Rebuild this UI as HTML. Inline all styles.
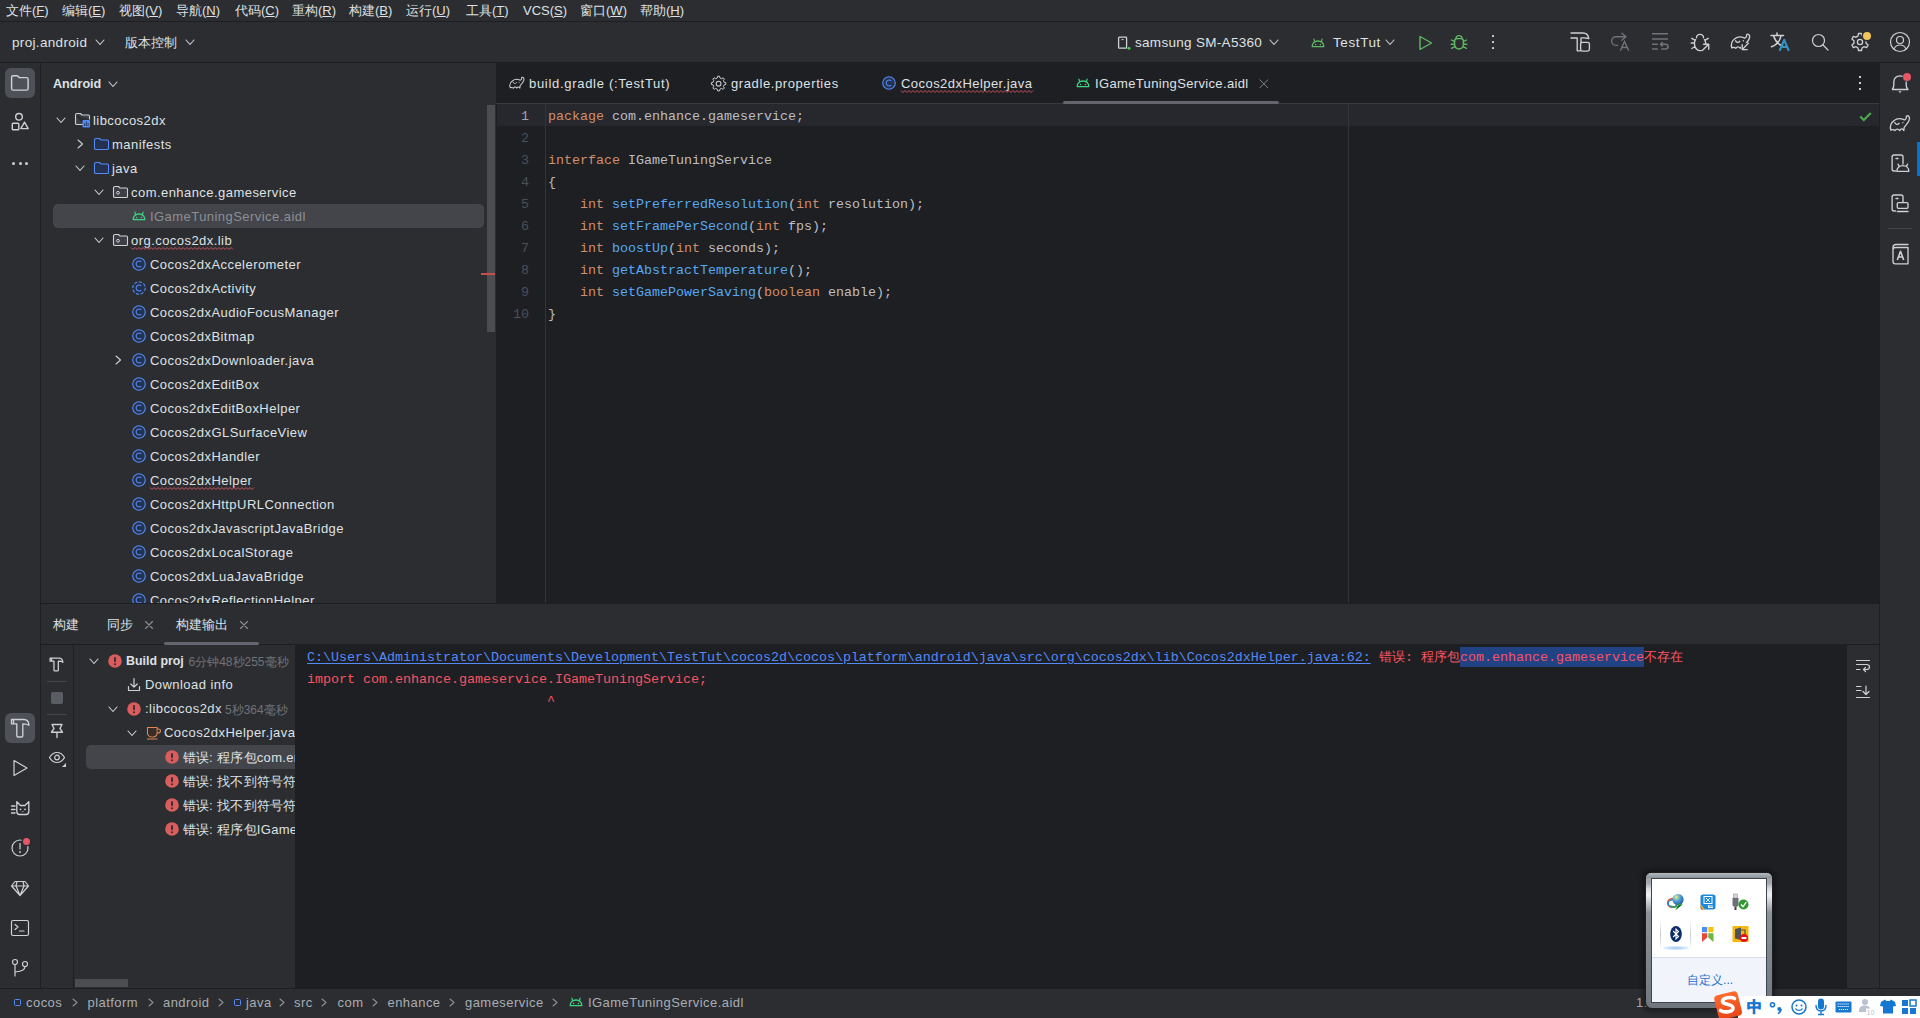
<!DOCTYPE html>
<html><head><meta charset="utf-8"><style>
*{margin:0;padding:0;box-sizing:border-box}
html,body{width:1920px;height:1018px;overflow:hidden}
body{background:#2B2D30;font-family:"Liberation Sans",sans-serif;color:#DFE1E5;position:relative;font-size:13px}
.a{position:absolute}
.t{position:absolute;white-space:pre}
svg{position:absolute;overflow:visible}
.s{fill:none;stroke:#CED0D6;stroke-width:1.1;stroke-linecap:round;stroke-linejoin:round}
.kw{color:#CF8E6D}.fn{color:#56A8F5}

</style></head><body>
<div class="a" style="left:0px;top:0px;width:1920px;height:21px;background:#2B2D30;"></div><div class="a" style="left:0px;top:21px;width:1920px;height:1px;background:#1E1F22;"></div><div class="a" style="left:0px;top:22px;width:1920px;height:40px;background:#2B2D30;"></div><div class="a" style="left:0px;top:62px;width:1920px;height:1px;background:#1E1F22;"></div><div class="a" style="left:40px;top:63px;width:1px;height:925px;background:#1E1F22;"></div><div class="a" style="left:41px;top:63px;width:455px;height:540px;background:#2B2D30;"></div><div class="a" style="left:496px;top:63px;width:1383px;height:40px;background:#1E1F22;"></div><div class="a" style="left:496px;top:103px;width:1383px;height:1px;background:#393B40;"></div><div class="a" style="left:496px;top:104px;width:1383px;height:499px;background:#1E1F22;"></div><div class="a" style="left:41px;top:603px;width:1838px;height:1px;background:#1E1F22;"></div><div class="a" style="left:41px;top:604px;width:1838px;height:384px;background:#2B2D30;"></div><div class="a" style="left:1879px;top:63px;width:1px;height:925px;background:#1E1F22;"></div><div class="a" style="left:0px;top:988px;width:1920px;height:1px;background:#1E1F22;"></div><div class="t" style="left:6px;top:4.23px;font-size:13px;line-height:14.95px;color:#DFE1E5;letter-spacing:0px;font-weight:normal;font-family:'Liberation Sans';">文件(<u>F</u>)</div><div class="t" style="left:62px;top:4.23px;font-size:13px;line-height:14.95px;color:#DFE1E5;letter-spacing:0px;font-weight:normal;font-family:'Liberation Sans';">编辑(<u>E</u>)</div><div class="t" style="left:119px;top:4.23px;font-size:13px;line-height:14.95px;color:#DFE1E5;letter-spacing:0px;font-weight:normal;font-family:'Liberation Sans';">视图(<u>V</u>)</div><div class="t" style="left:176px;top:4.23px;font-size:13px;line-height:14.95px;color:#DFE1E5;letter-spacing:0px;font-weight:normal;font-family:'Liberation Sans';">导航(<u>N</u>)</div><div class="t" style="left:235px;top:4.23px;font-size:13px;line-height:14.95px;color:#DFE1E5;letter-spacing:0px;font-weight:normal;font-family:'Liberation Sans';">代码(<u>C</u>)</div><div class="t" style="left:292px;top:4.23px;font-size:13px;line-height:14.95px;color:#DFE1E5;letter-spacing:0px;font-weight:normal;font-family:'Liberation Sans';">重构(<u>R</u>)</div><div class="t" style="left:349px;top:4.23px;font-size:13px;line-height:14.95px;color:#DFE1E5;letter-spacing:0px;font-weight:normal;font-family:'Liberation Sans';">构建(<u>B</u>)</div><div class="t" style="left:406px;top:4.23px;font-size:13px;line-height:14.95px;color:#DFE1E5;letter-spacing:0px;font-weight:normal;font-family:'Liberation Sans';">运行(<u>U</u>)</div><div class="t" style="left:466px;top:4.23px;font-size:13px;line-height:14.95px;color:#DFE1E5;letter-spacing:0px;font-weight:normal;font-family:'Liberation Sans';">工具(<u>T</u>)</div><div class="t" style="left:523px;top:4.23px;font-size:13px;line-height:14.95px;color:#DFE1E5;letter-spacing:0px;font-weight:normal;font-family:'Liberation Sans';">VCS(<u>S</u>)</div><div class="t" style="left:580px;top:4.23px;font-size:13px;line-height:14.95px;color:#DFE1E5;letter-spacing:0px;font-weight:normal;font-family:'Liberation Sans';">窗口(<u>W</u>)</div><div class="t" style="left:640px;top:4.23px;font-size:13px;line-height:14.95px;color:#DFE1E5;letter-spacing:0px;font-weight:normal;font-family:'Liberation Sans';">帮助(<u>H</u>)</div><div class="t" style="left:12px;top:34.78px;font-size:13.5px;line-height:15.52px;color:#DFE1E5;letter-spacing:0.33px;font-weight:normal;font-family:'Liberation Sans';">proj.android</div><svg style="left:95.0px;top:38.75px;" width="10" height="6.5" viewBox="0 0 10 6.5"><path d="M1 1 L5.0 5.5 L9 1" fill="none" stroke="#CED0D6" stroke-width="1.1" stroke-linecap="round" stroke-linejoin="round"/></svg><div class="t" style="left:125px;top:36.23px;font-size:13px;line-height:14.95px;color:#DFE1E5;letter-spacing:0px;font-weight:normal;font-family:'Liberation Sans';">版本控制</div><svg style="left:185.0px;top:38.75px;" width="10" height="6.5" viewBox="0 0 10 6.5"><path d="M1 1 L5.0 5.5 L9 1" fill="none" stroke="#CED0D6" stroke-width="1.1" stroke-linecap="round" stroke-linejoin="round"/></svg><svg style="left:1117px;top:36px;" width="14" height="14" viewBox="0 0 14 14"><rect x="1.6" y="1.2" width="8" height="11" rx="0.8" fill="none" stroke="#CED0D6" stroke-width="1.3"/><path d="M4.6 3.6 H6.6" stroke="#CED0D6" stroke-width="1"/><circle cx="12" cy="12.2" r="1.9" fill="#2B2D30"/><circle cx="12" cy="12.2" r="1.5" fill="#3DD03D"/></svg><div class="t" style="left:1135px;top:34.78px;font-size:13.5px;line-height:15.52px;color:#DFE1E5;letter-spacing:0.3px;font-weight:normal;font-family:'Liberation Sans';">samsung SM-A5360</div><svg style="left:1269.0px;top:38.75px;" width="10" height="6.5" viewBox="0 0 10 6.5"><path d="M1 1 L5.0 5.5 L9 1" fill="none" stroke="#CED0D6" stroke-width="1.1" stroke-linecap="round" stroke-linejoin="round"/></svg><svg style="left:1311px;top:38px;" width="14" height="10" viewBox="0 0 14 10"><g transform="scale(1.0)"><path d="M1.2 8.6 C1.2 5.2 3.6 3 7 3 C10.4 3 12.8 5.2 12.8 8.6 Z" fill="none" stroke="#5FB865" stroke-width="1.3" stroke-linejoin="round"/><path d="M3.7 3.9 L2.9 1.2 M10.3 3.9 L11.1 1.2" stroke="#5FB865" stroke-width="1.2" stroke-linecap="round"/><circle cx="4.6" cy="6.5" r="0.8" fill="#5FB865"/><circle cx="9.4" cy="6.5" r="0.8" fill="#5FB865"/></g></svg><div class="t" style="left:1333px;top:34.78px;font-size:13.5px;line-height:15.52px;color:#DFE1E5;letter-spacing:0.6px;font-weight:normal;font-family:'Liberation Sans';">TestTut</div><svg style="left:1385.0px;top:38.75px;" width="10" height="6.5" viewBox="0 0 10 6.5"><path d="M1 1 L5.0 5.5 L9 1" fill="none" stroke="#CED0D6" stroke-width="1.1" stroke-linecap="round" stroke-linejoin="round"/></svg><svg style="left:1418px;top:35px;" width="16" height="16" viewBox="0 0 16 16"><path d="M2 1.5 L13.5 8 L2 14.5 Z" fill="none" stroke="#5FB865" stroke-width="1.4" stroke-linejoin="round"/></svg><svg style="left:1450px;top:34px;" width="18" height="16" viewBox="0 0 18 16"><g fill="none" stroke="#5FB865" stroke-width="1.4" stroke-linecap="round" stroke-linejoin="round"><path d="M6 4.6 A3 3 0 0 1 12 4.6"/><path d="M4.6 7 C4.6 5.6 5.6 4.6 7 4.6 H11 C12.4 4.6 13.4 5.6 13.4 7 V10.5 C13.4 13.1 11.5 15 9 15 C6.5 15 4.6 13.1 4.6 10.5 Z"/><path d="M1.5 6 L4.6 7.6 M16.5 6 L13.4 7.6 M1.2 10.2 H4.6 M16.8 10.2 H13.4 M1.5 14.3 L4.8 12.6 M16.5 14.3 L13.2 12.6"/></g></svg><div class="a" style="left:1492px;top:35px;width:2.2px;height:2.4px;background:#CED0D6;border-radius:0.6px"></div><div class="a" style="left:1492px;top:41px;width:2.2px;height:2.4px;background:#CED0D6;border-radius:0.6px"></div><div class="a" style="left:1492px;top:47px;width:2.2px;height:2.4px;background:#CED0D6;border-radius:0.6px"></div><svg style="left:1570px;top:32px;" width="20" height="20" viewBox="0 0 20 20"><path d="M1 1 H13 C16 1 18.3 3 18.8 6.5 L14.5 5.8 H11 V10.5 M7.2 6 V18.8 H10.5 M7.2 6 H1 Z" fill="none" stroke="#CED0D6" stroke-width="1.35" stroke-linejoin="round" stroke-linecap="round"/><rect x="10.6" y="10.3" width="8.8" height="8.8" rx="1.8" fill="none" stroke="#CED0D6" stroke-width="1.35"/></svg><svg style="left:1611px;top:32px;" width="20" height="20" viewBox="0 0 20 20"><path d="M15 4.7 H5 A4.35 4.35 0 0 0 5 13.4 H6.5 M10.8 1.2 L15 4.7 L10.8 8.2" fill="none" stroke="#6F737A" stroke-width="1.35" stroke-linejoin="round" stroke-linecap="round"/><path d="M9.3 18.8 L13.5 9.4 L17.8 18.8 M10.8 15.5 H16.3" fill="none" stroke="#6F737A" stroke-width="1.4"/></svg><svg style="left:1650px;top:32px;" width="20" height="20" viewBox="0 0 20 20"><path d="M2 1.8 H18 M2 7 H18 M2 12.2 H7.8 M2 17 H7.8 M11.2 17 H15.6 A2.4 2.4 0 0 0 15.6 12.2 H10.5 M12.7 10 L10.5 12.2 L12.7 14.4" fill="none" stroke="#6F737A" stroke-width="1.6" stroke-linejoin="round"/></svg><svg style="left:1690px;top:32px;" width="20" height="20" viewBox="0 0 20 20"><path d="M6.5 5.8 A3.5 3.5 0 0 1 13.5 5.8 M5.6 7.5 C4.2 10 4.3 14 6 16.5 C7.2 18.2 9.2 18.9 11 18.6 M14.4 7.5 C15.3 9 15.7 10.6 15.8 12 M1.2 11 H4.6 M1.8 6.3 L5.2 8.3 M1.8 16.5 L5.2 14.5 M18.2 6.3 L14.8 8.3 M12.3 18.6 L18.6 12.3 M13.6 12.2 H18.7 V17.3" fill="none" stroke="#CED0D6" stroke-width="1.35" stroke-linejoin="round" stroke-linecap="round"/></svg><svg style="left:1730px;top:32px;" width="22" height="20" viewBox="0 0 22 20"><g transform="translate(1.2 1.6) scale(1.3)"><path d="M0.5 11 C-0.5 8.5 0.5 5.5 2.8 4 C4.5 2.5 7.5 2.2 10 3.3 C11 3.7 12 2.5 11.8 1.5 C11.6 0.6 12.8 0 13.6 0.8 C14.5 1.8 14 4 13 5.5 C12 7 11 8 10.3 9 L10 11.3 C9.3 10 8 9.5 7 11.3 C6 9.8 4.5 9.8 3.5 11.3 C2.8 10.6 1.5 10.5 0.5 11 Z" fill="none" stroke="#CED0D6" stroke-width="1.05" stroke-linejoin="round"/><path d="M3.3 5 C3.6 7 5.5 7.5 6.8 5.6" fill="none" stroke="#CED0D6" stroke-width="1"/><circle cx="9.3" cy="5.5" r="0.55" fill="#CED0D6"/></g><rect x="11" y="11" width="9" height="9" fill="#2B2D30"/><path d="M18.3 11.3 L12.2 17.6 M12.2 12.6 V17.6 H17.2" fill="none" stroke="#CED0D6" stroke-width="1.35" stroke-linecap="round" stroke-linejoin="round"/></svg><svg style="left:1770px;top:32px;" width="20" height="20" viewBox="0 0 20 20"><path d="M7 1 V3 M1 3.5 H13.5 M3.8 4.5 C5 8.5 8 12 12.5 14 M10.8 4.5 C9.8 9 6.5 12.8 1.5 14.8" fill="none" stroke="#CED0D6" stroke-width="1.5" stroke-linecap="round"/><path d="M9.6 18.8 L14.2 7.8 L18.8 18.8 M11.3 15 H17.1" fill="none" stroke="#3592C4" stroke-width="2.1" stroke-linejoin="round"/></svg><svg style="left:1810px;top:32px;" width="20" height="20" viewBox="0 0 20 20"><circle cx="8.5" cy="8.5" r="6" fill="none" stroke="#CED0D6" stroke-width="1.2" stroke-linecap="round" stroke-linejoin="round"/><path d="M13 13 L18 18" fill="none" stroke="#CED0D6" stroke-width="1.2" stroke-linecap="round" stroke-linejoin="round"/></svg><svg style="left:1850px;top:32px;" width="20" height="20" viewBox="0 0 20 20"><path d="M8.5 1.5 H11.5 L12.1 4.2 C12.8 4.5 13.4 4.8 14 5.3 L16.6 4.4 L18.1 7 L16 8.8 C16.1 9.6 16.1 10.4 16 11.2 L18.1 13 L16.6 15.6 L14 14.7 C13.4 15.2 12.8 15.5 12.1 15.8 L11.5 18.5 H8.5 L7.9 15.8 C7.2 15.5 6.6 15.2 6 14.7 L3.4 15.6 L1.9 13 L4 11.2 C3.9 10.4 3.9 9.6 4 8.8 L1.9 7 L3.4 4.4 L6 5.3 C6.6 4.8 7.2 4.5 7.9 4.2 Z" fill="none" stroke="#CED0D6" stroke-width="1.3" stroke-linejoin="round"/><circle cx="10" cy="10" r="2.6" fill="none" stroke="#CED0D6" stroke-width="1.3"/></svg><div class="a" style="left:1862.5px;top:31.5px;width:8px;height:8px;border-radius:4px;background:#F2C55C;box-shadow:0 0 0 1.5px #2B2D30"></div><svg style="left:1890px;top:32px;" width="20" height="20" viewBox="0 0 20 20"><circle cx="10" cy="10" r="9.5" fill="none" stroke="#CED0D6" stroke-width="1.2" stroke-linecap="round" stroke-linejoin="round"/><circle cx="10" cy="8" r="3.5" fill="none" stroke="#CED0D6" stroke-width="1.2" stroke-linecap="round" stroke-linejoin="round"/><path d="M4.2 16.5 C5.5 13.8 7.5 13 10 13 C12.5 13 14.5 13.8 15.8 16.5" fill="none" stroke="#CED0D6" stroke-width="1.2" stroke-linecap="round" stroke-linejoin="round"/></svg><div class="a" style="left:5px;top:68px;width:30px;height:30px;background:#4E5157;border-radius:6px"></div><svg style="left:10px;top:73px;" width="20" height="20" viewBox="0 0 20 20"><path d="M1.6 4.2 C1.6 3.2 2.3 2.7 3.1 2.7 H7.3 L9.4 4.6 H16.5 C17.4 4.6 18.1 5.3 18.1 6.2 V15.5 C18.1 16.4 17.4 17.1 16.5 17.1 H3.2 C2.3 17.1 1.6 16.4 1.6 15.5 Z" fill="none" stroke="#CED0D6" stroke-width="1.45" stroke-linejoin="round"/></svg><svg style="left:10px;top:112px;" width="20" height="20" viewBox="0 0 20 20"><circle cx="9" cy="4.8" r="3.3" fill="none" stroke="#CED0D6" stroke-width="1.4"/><rect x="2.3" y="11.3" width="6.5" height="6.5" rx="0.8" fill="none" stroke="#CED0D6" stroke-width="1.4"/><path d="M14.5 10.2 L18.2 16.6 H10.8 Z" fill="none" stroke="#CED0D6" stroke-width="1.4" stroke-linejoin="round"/></svg><div class="a" style="left:12.0px;top:161.5px;width:3px;height:3px;background:#CED0D6;border-radius:2px"></div><div class="a" style="left:18.5px;top:161.5px;width:3px;height:3px;background:#CED0D6;border-radius:2px"></div><div class="a" style="left:25.0px;top:161.5px;width:3px;height:3px;background:#CED0D6;border-radius:2px"></div><div class="a" style="left:5px;top:713px;width:30px;height:30px;background:#4E5157;border-radius:6px"></div><svg style="left:10px;top:718px;" width="20" height="20" viewBox="0 0 20 20"><path d="M1.5 1.5 H14 C16.8 1.5 18.6 3.5 19 7.2 C17.5 6.2 15.8 5.8 13 5.8 H12.8 V17.8 C12.8 18.5 12.3 19 11.6 19 H8 C7.3 19 6.8 18.5 6.8 17.8 V5.8 H1.5 Z M3.5 1.5 V5.8" fill="none" stroke="#CED0D6" stroke-width="1.35" stroke-linejoin="round" stroke-linecap="round"/></svg><svg style="left:10px;top:758px;" width="20" height="20" viewBox="0 0 20 20"><path d="M4 2.5 L17 10 L4 17.5 Z" fill="none" stroke="#CED0D6" stroke-width="1.2" stroke-linecap="round" stroke-linejoin="round"/></svg><svg style="left:10px;top:798px;" width="20" height="20" viewBox="0 0 20 20"><path d="M6.8 13.5 V3.6 L10.5 7.5 H15 L18.8 3.6 V13.5 C18.8 15.5 17.8 16.5 16 16.5 H9.5 C7.8 16.5 6.8 15.5 6.8 13.5 Z M1.5 8 H5 M1.5 11.5 H5 M1.5 15 H5" fill="none" stroke="#CED0D6" stroke-width="1.35" stroke-linejoin="round" stroke-linecap="round"/><circle cx="10.5" cy="11.3" r="0.9" fill="#CED0D6"/><circle cx="15" cy="11.3" r="0.9" fill="#CED0D6"/><path d="M12.2 13.4 L12.75 14 L13.3 13.4" fill="none" stroke="#CED0D6" stroke-width="0.9"/></svg><svg style="left:10px;top:838px;" width="20" height="20" viewBox="0 0 20 20"><circle cx="10" cy="10" r="8" fill="none" stroke="#CED0D6" stroke-width="1.2" stroke-linecap="round" stroke-linejoin="round"/><path d="M10 5.5 V11" fill="none" stroke="#CED0D6" stroke-width="1.2" stroke-linecap="round" stroke-linejoin="round"/><circle cx="10" cy="14" r="0.9" fill="#CED0D6"/></svg><div class="a" style="left:23px;top:838px;width:7px;height:7px;border-radius:4px;background:#E55765;box-shadow:0 0 0 1.5px #2B2D30"></div><svg style="left:10px;top:878px;" width="20" height="20" viewBox="0 0 20 20"><path d="M5 3.5 H15 L18.5 8 L10 17.5 L1.5 8 Z M1.5 8 H18.5 M7 3.5 L6 8 L10 17.5 L14 8 L13 3.5" fill="none" stroke="#CED0D6" stroke-width="1.2" stroke-linecap="round" stroke-linejoin="round"/></svg><svg style="left:10px;top:918px;" width="20" height="20" viewBox="0 0 20 20"><rect x="1.5" y="2.5" width="17" height="15" rx="1.5" fill="none" stroke="#CED0D6" stroke-width="1.2" stroke-linecap="round" stroke-linejoin="round"/><path d="M5 6.5 L8 9 L5 11.5 M9.5 13 H14" fill="none" stroke="#CED0D6" stroke-width="1.2" stroke-linecap="round" stroke-linejoin="round"/></svg><svg style="left:10px;top:958px;" width="20" height="20" viewBox="0 0 20 20"><circle cx="5" cy="4" r="2.5" fill="none" stroke="#CED0D6" stroke-width="1.2" stroke-linecap="round" stroke-linejoin="round"/><circle cx="15" cy="6" r="2.5" fill="none" stroke="#CED0D6" stroke-width="1.2" stroke-linecap="round" stroke-linejoin="round"/><path d="M5 6.5 V18 M15 8.5 C15 12 12 13 5 14" fill="none" stroke="#CED0D6" stroke-width="1.2" stroke-linecap="round" stroke-linejoin="round"/></svg><svg style="left:1889px;top:72px;" width="22" height="22" viewBox="0 0 22 22"><path d="M3 17.5 H19 C17.7 16.5 17.2 15 17.2 13 V9.5 M3 17.5 C4.3 16.5 4.8 15 4.8 13 V10 C4.8 6.3 7.3 3.8 11 3.8 C12 3.8 12.8 4 13.6 4.4" fill="none" stroke="#CED0D6" stroke-width="1.35" stroke-linejoin="round"/><path d="M9.3 19.3 H12.7 L11 21 Z" fill="#CED0D6"/></svg><div class="a" style="left:1902.5px;top:72.5px;width:8px;height:8px;border-radius:4px;background:#E55765"></div><svg style="left:1889px;top:114px;" width="22" height="18" viewBox="0 0 22 18"><g transform="translate(1.2 1.2) scale(1.36)"><path d="M0.5 11 C-0.5 8.5 0.5 5.5 2.8 4 C4.5 2.5 7.5 2.2 10 3.3 C11 3.7 12 2.5 11.8 1.5 C11.6 0.6 12.8 0 13.6 0.8 C14.5 1.8 14 4 13 5.5 C12 7 11 8 10.3 9 L10 11.3 C9.3 10 8 9.5 7 11.3 C6 9.8 4.5 9.8 3.5 11.3 C2.8 10.6 1.5 10.5 0.5 11 Z" fill="none" stroke="#CED0D6" stroke-width="0.95" stroke-linejoin="round"/><path d="M3.3 5 C3.6 7 5.5 7.5 6.8 5.6" fill="none" stroke="#CED0D6" stroke-width="0.9"/><circle cx="9.3" cy="5.5" r="0.5" fill="#CED0D6"/></g></svg><div class="a" style="left:1917px;top:142px;width:3px;height:34px;background:#0A72C9;"></div><svg style="left:1890px;top:153px;" width="22" height="22" viewBox="0 0 22 22"><path d="M5.5 18 H4 C2.9 18 2.1 17.2 2.1 16.1 V4 C2.1 2.9 2.9 2 4 2 H11 C12.1 2 13 2.9 13 4 V11 M6 5.5 H8" fill="none" stroke="#CED0D6" stroke-width="1.35" stroke-linejoin="round" stroke-linecap="round"/><path d="M6.8 18.3 C6.8 14.8 9.3 12.6 12.8 12.6 C16.3 12.6 18.8 14.8 18.8 18.3 Z M9.2 13.3 L8 11.2 M16.4 13.3 L17.6 11.2" fill="none" stroke="#CED0D6" stroke-width="1.35" stroke-linejoin="round" stroke-linecap="round"/></svg><svg style="left:1890px;top:193px;" width="22" height="22" viewBox="0 0 22 22"><path d="M5.5 18 H4 C2.9 18 2.1 17.2 2.1 16.1 V4 C2.1 2.9 2.9 2 4 2 H11 C12.1 2 13 2.9 13 4 V9 M6 5.5 H8" fill="none" stroke="#CED0D6" stroke-width="1.35" stroke-linejoin="round" stroke-linecap="round"/><rect x="7.3" y="9.6" width="10.7" height="5.7" rx="1" fill="none" stroke="#CED0D6" stroke-width="1.35" stroke-linejoin="round" stroke-linecap="round"/><path d="M7.3 18.5 H18" fill="none" stroke="#CED0D6" stroke-width="1.35" stroke-linejoin="round" stroke-linecap="round"/></svg><div class="a" style="left:1888px;top:228px;width:24px;height:1px;background:#43454A;"></div><svg style="left:1890px;top:243px;" width="22" height="22" viewBox="0 0 22 22"><path d="M18 1.5 H6 C4.2 1.5 3 2.7 3 4.5 V18.5 C3 19.8 4 20.8 5.3 20.8 H18 V4.5 H6 C4.2 4.5 3 5.2 3 6.5" fill="none" stroke="#CED0D6" stroke-width="1.35" stroke-linejoin="round" stroke-linecap="round"/><path d="M7.3 17 L10.5 8.3 L13.7 17 M8.5 14 H12.5" fill="none" stroke="#CED0D6" stroke-width="1.6" stroke-linejoin="round"/></svg><div class="t" style="left:53px;top:76.60px;font-size:12.6px;line-height:14.49px;color:#DFE1E5;letter-spacing:0px;font-weight:bold;font-family:'Liberation Sans';">Android</div><svg style="left:108.0px;top:80.75px;" width="10" height="6.5" viewBox="0 0 10 6.5"><path d="M1 1 L5.0 5.5 L9 1" fill="none" stroke="#CED0D6" stroke-width="1.1" stroke-linecap="round" stroke-linejoin="round"/></svg><svg style="left:56.0px;top:116.75px;" width="10" height="6.5" viewBox="0 0 10 6.5"><path d="M1 1 L5.0 5.5 L9 1" fill="none" stroke="#CED0D6" stroke-width="1.1" stroke-linecap="round" stroke-linejoin="round"/></svg><svg style="left:75px;top:113px;" width="16" height="16" viewBox="0 0 16 16"><path d="M0.5 2 C0.5 1.2 1.1 0.5 2 0.5 H5.5 L7 2 H13.5 C14.3 2 14.5 2.6 14.5 3.3 V6.5 M8 11.5 H2 C1.2 11.5 0.5 11 0.5 10.2 V2" fill="#3C3F45" stroke="#CED0D6" stroke-width="1.1" stroke-linejoin="round"/><rect x="7.5" y="7" width="7.5" height="7.5" rx="1" fill="#548AF7"/><path d="M9.5 13 V10.5 M11.3 13 V8.5 M13.1 13 V10" stroke="#25324D" stroke-width="0.9"/></svg><div class="t" style="left:93px;top:111.6px;font-size:13px;line-height:18px;color:#DFE1E5;letter-spacing:0.45px">libcocos2dx</div><svg style="left:76.75px;top:139.0px;" width="6.5" height="10" viewBox="0 0 6.5 10"><path d="M1 1 L5.5 5.0 L1 9" fill="none" stroke="#CED0D6" stroke-width="1.1" stroke-linecap="round" stroke-linejoin="round"/></svg><svg style="left:94px;top:138px;" width="16" height="14" viewBox="0 0 16 14"><path d="M0.5 2 C0.5 1.2 1.1 0.5 2 0.5 H5.5 L7 2 H13.5 C14.3 2 14.5 2.6 14.5 3.3 V10.5 C14.5 11.3 14 11.5 13.3 11.5 H2 C1.2 11.5 0.5 11 0.5 10.2 Z" fill="#25324D" stroke="#548AF7" stroke-width="1.1" stroke-linejoin="round"/></svg><div class="t" style="left:112px;top:135.6px;font-size:13px;line-height:18px;color:#DFE1E5;letter-spacing:0.45px">manifests</div><svg style="left:75.0px;top:164.75px;" width="10" height="6.5" viewBox="0 0 10 6.5"><path d="M1 1 L5.0 5.5 L9 1" fill="none" stroke="#CED0D6" stroke-width="1.1" stroke-linecap="round" stroke-linejoin="round"/></svg><svg style="left:94px;top:162px;" width="16" height="14" viewBox="0 0 16 14"><path d="M0.5 2 C0.5 1.2 1.1 0.5 2 0.5 H5.5 L7 2 H13.5 C14.3 2 14.5 2.6 14.5 3.3 V10.5 C14.5 11.3 14 11.5 13.3 11.5 H2 C1.2 11.5 0.5 11 0.5 10.2 Z" fill="#25324D" stroke="#548AF7" stroke-width="1.1" stroke-linejoin="round"/></svg><div class="t" style="left:112px;top:159.6px;font-size:13px;line-height:18px;color:#DFE1E5;letter-spacing:0.45px">java</div><svg style="left:94.0px;top:188.75px;" width="10" height="6.5" viewBox="0 0 10 6.5"><path d="M1 1 L5.0 5.5 L9 1" fill="none" stroke="#CED0D6" stroke-width="1.1" stroke-linecap="round" stroke-linejoin="round"/></svg><svg style="left:113px;top:186px;" width="16" height="14" viewBox="0 0 16 14"><path d="M0.5 2 C0.5 1.2 1.1 0.5 2 0.5 H5.5 L7 2 H13.5 C14.3 2 14.5 2.6 14.5 3.3 V10.5 C14.5 11.3 14 11.5 13.3 11.5 H2 C1.2 11.5 0.5 11 0.5 10.2 Z" fill="#3C3F45" stroke="#CED0D6" stroke-width="1.1" stroke-linejoin="round"/><circle cx="5" cy="6.8" r="1.4" fill="none" stroke="#CED0D6" stroke-width="1"/></svg><div class="t" style="left:131px;top:183.6px;font-size:13px;line-height:18px;color:#DFE1E5;letter-spacing:0.45px">com.enhance.gameservice</div><div class="a" style="left:53px;top:204px;width:431px;height:24px;background:#43454A;border-radius:5px"></div><svg style="left:132px;top:211px;" width="14" height="10" viewBox="0 0 14 10"><g transform="scale(1.0)"><path d="M1.2 8.6 C1.2 5.2 3.6 3 7 3 C10.4 3 12.8 5.2 12.8 8.6 Z" fill="none" stroke="#3FD582" stroke-width="1.3" stroke-linejoin="round"/><path d="M3.7 3.9 L2.9 1.2 M10.3 3.9 L11.1 1.2" stroke="#3FD582" stroke-width="1.2" stroke-linecap="round"/><circle cx="4.6" cy="6.5" r="0.8" fill="#3FD582"/><circle cx="9.4" cy="6.5" r="0.8" fill="#3FD582"/></g></svg><div class="t" style="left:150px;top:207.6px;font-size:13px;line-height:18px;color:#8C8F94;letter-spacing:0.45px">IGameTuningService.aidl</div><svg style="left:94.0px;top:236.75px;" width="10" height="6.5" viewBox="0 0 10 6.5"><path d="M1 1 L5.0 5.5 L9 1" fill="none" stroke="#CED0D6" stroke-width="1.1" stroke-linecap="round" stroke-linejoin="round"/></svg><svg style="left:113px;top:234px;" width="16" height="14" viewBox="0 0 16 14"><path d="M0.5 2 C0.5 1.2 1.1 0.5 2 0.5 H5.5 L7 2 H13.5 C14.3 2 14.5 2.6 14.5 3.3 V10.5 C14.5 11.3 14 11.5 13.3 11.5 H2 C1.2 11.5 0.5 11 0.5 10.2 Z" fill="#3C3F45" stroke="#CED0D6" stroke-width="1.1" stroke-linejoin="round"/><circle cx="5" cy="6.8" r="1.4" fill="none" stroke="#CED0D6" stroke-width="1"/></svg><div class="t" style="left:131px;top:231.6px;font-size:13px;line-height:18px;color:#DFE1E5;letter-spacing:0.45px">org.cocos2dx.lib</div><svg style="left:131px;top:246.5px" width="104" height="4" viewBox="0 0 104 4"><polyline points="0.0,0.5 2.0,2.5 4.0,0.5 6.0,2.5 8.0,0.5 10.0,2.5 12.0,0.5 14.0,2.5 16.0,0.5 18.0,2.5 20.0,0.5 22.0,2.5 24.0,0.5 26.0,2.5 28.0,0.5 30.0,2.5 32.0,0.5 34.0,2.5 36.0,0.5 38.0,2.5 40.0,0.5 42.0,2.5 44.0,0.5 46.0,2.5 48.0,0.5 50.0,2.5 52.0,0.5 54.0,2.5 56.0,0.5 58.0,2.5 60.0,0.5 62.0,2.5 64.0,0.5 66.0,2.5 68.0,0.5 70.0,2.5 72.0,0.5 74.0,2.5 76.0,0.5 78.0,2.5 80.0,0.5 82.0,2.5 84.0,0.5 86.0,2.5 88.0,0.5 90.0,2.5 92.0,0.5 94.0,2.5 96.0,0.5 98.0,2.5 100.0,0.5 102.0,2.5" fill="none" stroke="#E05563" stroke-width="0.9"/></svg><svg style="left:132px;top:257px;" width="16" height="16" viewBox="0 0 16 16"><circle cx="7" cy="7" r="6.3" fill="#25324D" stroke="#548AF7" stroke-width="1.1" /><path d="M9.3 4.9 A3 3 0 1 0 9.3 9.1" fill="none" stroke="#548AF7" stroke-width="1.1"/></svg><div class="t" style="left:150px;top:255.6px;font-size:13px;line-height:18px;color:#DFE1E5;letter-spacing:0.45px">Cocos2dxAccelerometer</div><svg style="left:132px;top:281px;" width="16" height="16" viewBox="0 0 16 16"><circle cx="7" cy="7" r="6.3" fill="#25324D" stroke="#548AF7" stroke-width="1.1" stroke-dasharray="3.2 1.6"/><path d="M9.3 4.9 A3 3 0 1 0 9.3 9.1" fill="none" stroke="#548AF7" stroke-width="1.1"/></svg><div class="t" style="left:150px;top:279.6px;font-size:13px;line-height:18px;color:#DFE1E5;letter-spacing:0.45px">Cocos2dxActivity</div><svg style="left:132px;top:305px;" width="16" height="16" viewBox="0 0 16 16"><circle cx="7" cy="7" r="6.3" fill="#25324D" stroke="#548AF7" stroke-width="1.1" /><path d="M9.3 4.9 A3 3 0 1 0 9.3 9.1" fill="none" stroke="#548AF7" stroke-width="1.1"/></svg><div class="t" style="left:150px;top:303.6px;font-size:13px;line-height:18px;color:#DFE1E5;letter-spacing:0.45px">Cocos2dxAudioFocusManager</div><svg style="left:132px;top:329px;" width="16" height="16" viewBox="0 0 16 16"><circle cx="7" cy="7" r="6.3" fill="#25324D" stroke="#548AF7" stroke-width="1.1" /><path d="M9.3 4.9 A3 3 0 1 0 9.3 9.1" fill="none" stroke="#548AF7" stroke-width="1.1"/></svg><div class="t" style="left:150px;top:327.6px;font-size:13px;line-height:18px;color:#DFE1E5;letter-spacing:0.45px">Cocos2dxBitmap</div><svg style="left:132px;top:353px;" width="16" height="16" viewBox="0 0 16 16"><circle cx="7" cy="7" r="6.3" fill="#25324D" stroke="#548AF7" stroke-width="1.1" /><path d="M9.3 4.9 A3 3 0 1 0 9.3 9.1" fill="none" stroke="#548AF7" stroke-width="1.1"/></svg><svg style="left:114.75px;top:355.0px;" width="6.5" height="10" viewBox="0 0 6.5 10"><path d="M1 1 L5.5 5.0 L1 9" fill="none" stroke="#CED0D6" stroke-width="1.1" stroke-linecap="round" stroke-linejoin="round"/></svg><div class="t" style="left:150px;top:351.6px;font-size:13px;line-height:18px;color:#DFE1E5;letter-spacing:0.45px">Cocos2dxDownloader.java</div><svg style="left:132px;top:377px;" width="16" height="16" viewBox="0 0 16 16"><circle cx="7" cy="7" r="6.3" fill="#25324D" stroke="#548AF7" stroke-width="1.1" /><path d="M9.3 4.9 A3 3 0 1 0 9.3 9.1" fill="none" stroke="#548AF7" stroke-width="1.1"/></svg><div class="t" style="left:150px;top:375.6px;font-size:13px;line-height:18px;color:#DFE1E5;letter-spacing:0.45px">Cocos2dxEditBox</div><svg style="left:132px;top:401px;" width="16" height="16" viewBox="0 0 16 16"><circle cx="7" cy="7" r="6.3" fill="#25324D" stroke="#548AF7" stroke-width="1.1" /><path d="M9.3 4.9 A3 3 0 1 0 9.3 9.1" fill="none" stroke="#548AF7" stroke-width="1.1"/></svg><div class="t" style="left:150px;top:399.6px;font-size:13px;line-height:18px;color:#DFE1E5;letter-spacing:0.45px">Cocos2dxEditBoxHelper</div><svg style="left:132px;top:425px;" width="16" height="16" viewBox="0 0 16 16"><circle cx="7" cy="7" r="6.3" fill="#25324D" stroke="#548AF7" stroke-width="1.1" /><path d="M9.3 4.9 A3 3 0 1 0 9.3 9.1" fill="none" stroke="#548AF7" stroke-width="1.1"/></svg><div class="t" style="left:150px;top:423.6px;font-size:13px;line-height:18px;color:#DFE1E5;letter-spacing:0.45px">Cocos2dxGLSurfaceView</div><svg style="left:132px;top:449px;" width="16" height="16" viewBox="0 0 16 16"><circle cx="7" cy="7" r="6.3" fill="#25324D" stroke="#548AF7" stroke-width="1.1" /><path d="M9.3 4.9 A3 3 0 1 0 9.3 9.1" fill="none" stroke="#548AF7" stroke-width="1.1"/></svg><div class="t" style="left:150px;top:447.6px;font-size:13px;line-height:18px;color:#DFE1E5;letter-spacing:0.45px">Cocos2dxHandler</div><svg style="left:132px;top:473px;" width="16" height="16" viewBox="0 0 16 16"><circle cx="7" cy="7" r="6.3" fill="#25324D" stroke="#548AF7" stroke-width="1.1" /><path d="M9.3 4.9 A3 3 0 1 0 9.3 9.1" fill="none" stroke="#548AF7" stroke-width="1.1"/></svg><div class="t" style="left:150px;top:471.6px;font-size:13px;line-height:18px;color:#DFE1E5;letter-spacing:0.45px">Cocos2dxHelper</div><svg style="left:150px;top:486.5px" width="105" height="4" viewBox="0 0 105 4"><polyline points="0.0,0.5 2.0,2.5 4.0,0.5 6.0,2.5 8.0,0.5 10.0,2.5 12.0,0.5 14.0,2.5 16.0,0.5 18.0,2.5 20.0,0.5 22.0,2.5 24.0,0.5 26.0,2.5 28.0,0.5 30.0,2.5 32.0,0.5 34.0,2.5 36.0,0.5 38.0,2.5 40.0,0.5 42.0,2.5 44.0,0.5 46.0,2.5 48.0,0.5 50.0,2.5 52.0,0.5 54.0,2.5 56.0,0.5 58.0,2.5 60.0,0.5 62.0,2.5 64.0,0.5 66.0,2.5 68.0,0.5 70.0,2.5 72.0,0.5 74.0,2.5 76.0,0.5 78.0,2.5 80.0,0.5 82.0,2.5 84.0,0.5 86.0,2.5 88.0,0.5 90.0,2.5 92.0,0.5 94.0,2.5 96.0,0.5 98.0,2.5 100.0,0.5 102.0,2.5 104.0,0.5" fill="none" stroke="#E05563" stroke-width="0.9"/></svg><svg style="left:132px;top:497px;" width="16" height="16" viewBox="0 0 16 16"><circle cx="7" cy="7" r="6.3" fill="#25324D" stroke="#548AF7" stroke-width="1.1" /><path d="M9.3 4.9 A3 3 0 1 0 9.3 9.1" fill="none" stroke="#548AF7" stroke-width="1.1"/></svg><div class="t" style="left:150px;top:495.6px;font-size:13px;line-height:18px;color:#DFE1E5;letter-spacing:0.45px">Cocos2dxHttpURLConnection</div><svg style="left:132px;top:521px;" width="16" height="16" viewBox="0 0 16 16"><circle cx="7" cy="7" r="6.3" fill="#25324D" stroke="#548AF7" stroke-width="1.1" /><path d="M9.3 4.9 A3 3 0 1 0 9.3 9.1" fill="none" stroke="#548AF7" stroke-width="1.1"/></svg><div class="t" style="left:150px;top:519.6px;font-size:13px;line-height:18px;color:#DFE1E5;letter-spacing:0.45px">Cocos2dxJavascriptJavaBridge</div><svg style="left:132px;top:545px;" width="16" height="16" viewBox="0 0 16 16"><circle cx="7" cy="7" r="6.3" fill="#25324D" stroke="#548AF7" stroke-width="1.1" /><path d="M9.3 4.9 A3 3 0 1 0 9.3 9.1" fill="none" stroke="#548AF7" stroke-width="1.1"/></svg><div class="t" style="left:150px;top:543.6px;font-size:13px;line-height:18px;color:#DFE1E5;letter-spacing:0.45px">Cocos2dxLocalStorage</div><svg style="left:132px;top:569px;" width="16" height="16" viewBox="0 0 16 16"><circle cx="7" cy="7" r="6.3" fill="#25324D" stroke="#548AF7" stroke-width="1.1" /><path d="M9.3 4.9 A3 3 0 1 0 9.3 9.1" fill="none" stroke="#548AF7" stroke-width="1.1"/></svg><div class="t" style="left:150px;top:567.6px;font-size:13px;line-height:18px;color:#DFE1E5;letter-spacing:0.45px">Cocos2dxLuaJavaBridge</div><svg style="left:132px;top:593px;" width="16" height="16" viewBox="0 0 16 16"><circle cx="7" cy="7" r="6.3" fill="#25324D" stroke="#548AF7" stroke-width="1.1" /><path d="M9.3 4.9 A3 3 0 1 0 9.3 9.1" fill="none" stroke="#548AF7" stroke-width="1.1"/></svg><div class="t" style="left:150px;top:591.6px;font-size:13px;line-height:18px;color:#DFE1E5;letter-spacing:0.45px">Cocos2dxReflectionHelper</div><div class="a" style="left:487px;top:105px;width:8px;height:227px;background:#4B4D51;border-radius:0"></div><div class="a" style="left:481px;top:273px;width:14px;height:1.5px;background:#C94F4F;"></div><div class="a" style="left:41px;top:603px;width:455px;height:1px;background:#1E1F22;"></div><div class="a" style="left:41px;top:604px;width:455px;height:10px;background:#2B2D30;"></div><svg style="left:509px;top:76px;" width="18" height="14" viewBox="0 0 18 14"><g transform="translate(0.8 0.8)"><path d="M0.5 11 C-0.5 8.5 0.5 5.5 2.8 4 C4.5 2.5 7.5 2.2 10 3.3 C11 3.7 12 2.5 11.8 1.5 C11.6 0.6 12.8 0 13.6 0.8 C14.5 1.8 14 4 13 5.5 C12 7 11 8 10.3 9 L10 11.3 C9.3 10 8 9.5 7 11.3 C6 9.8 4.5 9.8 3.5 11.3 C2.8 10.6 1.5 10.5 0.5 11 Z" fill="none" stroke="#CED0D6" stroke-width="1.05" stroke-linejoin="round"/><path d="M3.3 5 C3.6 7 5.5 7.5 6.8 5.6" fill="none" stroke="#CED0D6" stroke-width="1"/><circle cx="9.3" cy="5.5" r="0.55" fill="#CED0D6"/></g></svg><div class="t" style="left:529px;top:75px;font-size:13px;line-height:18px;color:#DFE1E5;letter-spacing:0.7px">build.gradle (:TestTut)</div><svg style="left:711px;top:76px;" width="16" height="16" viewBox="0 0 16 16"><g fill="none" stroke="#CED0D6" stroke-width="1.05" stroke-linejoin="round"><path d="M7 0.8 L9 0.8 L9.4 2.6 L11.1 3.4 L12.7 2.4 L14.1 3.8 L13.1 5.4 L13.8 7.1 L15.6 7.5 V9.5 L13.8 9.9 L13.1 11.6 L14.1 13.2 L12.7 14.6 L11.1 13.6 L9.4 14.4 L9 16.2 H7 L6.6 14.4 L4.9 13.6 L3.3 14.6 L1.9 13.2 L2.9 11.6 L2.2 9.9 L0.4 9.5 V7.5 L2.2 7.1 L2.9 5.4 L1.9 3.8 L3.3 2.4 L4.9 3.4 L6.6 2.6 Z" transform="translate(0,-0.5) scale(0.95)"/><circle cx="7.6" cy="7.7" r="2.4"/></g></svg><div class="t" style="left:731px;top:75px;font-size:13px;line-height:18px;color:#DFE1E5;letter-spacing:0.6px">gradle.properties</div><svg style="left:882px;top:76px;" width="16" height="16" viewBox="0 0 16 16"><circle cx="7" cy="7" r="6.3" fill="#25324D" stroke="#548AF7" stroke-width="1.1" /><path d="M9.3 4.9 A3 3 0 1 0 9.3 9.1" fill="none" stroke="#548AF7" stroke-width="1.1"/></svg><div class="t" style="left:901px;top:75px;font-size:13px;line-height:18px;color:#DFE1E5;letter-spacing:0.45px">Cocos2dxHelper.java</div><svg style="left:901px;top:89.5px" width="133" height="4" viewBox="0 0 133 4"><polyline points="0.0,0.5 2.0,2.5 4.0,0.5 6.0,2.5 8.0,0.5 10.0,2.5 12.0,0.5 14.0,2.5 16.0,0.5 18.0,2.5 20.0,0.5 22.0,2.5 24.0,0.5 26.0,2.5 28.0,0.5 30.0,2.5 32.0,0.5 34.0,2.5 36.0,0.5 38.0,2.5 40.0,0.5 42.0,2.5 44.0,0.5 46.0,2.5 48.0,0.5 50.0,2.5 52.0,0.5 54.0,2.5 56.0,0.5 58.0,2.5 60.0,0.5 62.0,2.5 64.0,0.5 66.0,2.5 68.0,0.5 70.0,2.5 72.0,0.5 74.0,2.5 76.0,0.5 78.0,2.5 80.0,0.5 82.0,2.5 84.0,0.5 86.0,2.5 88.0,0.5 90.0,2.5 92.0,0.5 94.0,2.5 96.0,0.5 98.0,2.5 100.0,0.5 102.0,2.5 104.0,0.5 106.0,2.5 108.0,0.5 110.0,2.5 112.0,0.5 114.0,2.5 116.0,0.5 118.0,2.5 120.0,0.5 122.0,2.5 124.0,0.5 126.0,2.5 128.0,0.5 130.0,2.5 132.0,0.5" fill="none" stroke="#E05563" stroke-width="0.9"/></svg><svg style="left:1075.5px;top:77.5px;" width="14" height="10" viewBox="0 0 14 10"><g transform="scale(1.0)"><path d="M1.2 8.6 C1.2 5.2 3.6 3 7 3 C10.4 3 12.8 5.2 12.8 8.6 Z" fill="none" stroke="#3FD582" stroke-width="1.3" stroke-linejoin="round"/><path d="M3.7 3.9 L2.9 1.2 M10.3 3.9 L11.1 1.2" stroke="#3FD582" stroke-width="1.2" stroke-linecap="round"/><circle cx="4.6" cy="6.5" r="0.8" fill="#3FD582"/><circle cx="9.4" cy="6.5" r="0.8" fill="#3FD582"/></g></svg><div class="t" style="left:1095px;top:75px;font-size:13px;line-height:18px;color:#DFE1E5;letter-spacing:0.35px">IGameTuningService.aidl</div><svg style="left:1258.5px;top:78.5px;" width="10" height="10" viewBox="0 0 10 10"><path d="M0.8 0.8 L8.8 8.8 M8.8 0.8 L0.8 8.8" stroke="#7E8187" stroke-width="1" stroke-linecap="round"/></svg><div class="a" style="left:1063px;top:100.7px;width:216px;height:3px;background:#63666C;border-radius:1.5px"></div><div class="a" style="left:1859px;top:76px;width:2px;height:2.2px;background:#CED0D6;"></div><div class="a" style="left:1859px;top:82px;width:2px;height:2.2px;background:#CED0D6;"></div><div class="a" style="left:1859px;top:88px;width:2px;height:2.2px;background:#CED0D6;"></div><div class="a" style="left:497px;top:104px;width:1382px;height:22px;background:#26282E;"></div><div class="a" style="left:545px;top:104px;width:1px;height:499px;background:#313438;"></div><div class="a" style="left:1348px;top:104px;width:1px;height:499px;background:#313438;"></div><div class="a" style="left:1855px;top:106px;width:22px;height:20px;background:#26282E;border-radius:4px"></div><svg style="left:1859px;top:111px;" width="14" height="12" viewBox="0 0 14 12"><path d="M1.2 5.5 L4.8 9 L11.8 2" fill="none" stroke="#4EA64D" stroke-width="2.3"/></svg><div class="a" style="left:497px;top:104px;width:1px;height:0px;background:#1E1F22;"></div><div class="t" style="left:497px;top:105.5px;width:32px;text-align:right;font-family:'Liberation Mono';font-size:13.33px;line-height:22px;color:#A1A3AB">1</div><div class="t" style="left:548px;top:105.5px;font-family:'Liberation Mono';font-size:13.33px;line-height:22px;color:#BCBEC4"><span class="kw">package</span> com.enhance.gameservice;</div><div class="t" style="left:497px;top:127.5px;width:32px;text-align:right;font-family:'Liberation Mono';font-size:13.33px;line-height:22px;color:#4B5059">2</div><div class="t" style="left:548px;top:127.5px;font-family:'Liberation Mono';font-size:13.33px;line-height:22px;color:#BCBEC4"></div><div class="t" style="left:497px;top:149.5px;width:32px;text-align:right;font-family:'Liberation Mono';font-size:13.33px;line-height:22px;color:#4B5059">3</div><div class="t" style="left:548px;top:149.5px;font-family:'Liberation Mono';font-size:13.33px;line-height:22px;color:#BCBEC4"><span class="kw">interface</span> IGameTuningService</div><div class="t" style="left:497px;top:171.5px;width:32px;text-align:right;font-family:'Liberation Mono';font-size:13.33px;line-height:22px;color:#4B5059">4</div><div class="t" style="left:548px;top:171.5px;font-family:'Liberation Mono';font-size:13.33px;line-height:22px;color:#BCBEC4">{</div><div class="t" style="left:497px;top:193.5px;width:32px;text-align:right;font-family:'Liberation Mono';font-size:13.33px;line-height:22px;color:#4B5059">5</div><div class="t" style="left:548px;top:193.5px;font-family:'Liberation Mono';font-size:13.33px;line-height:22px;color:#BCBEC4">    <span class="kw">int</span> <span class="fn">setPreferredResolution</span>(<span class="kw">int</span> resolution);</div><div class="t" style="left:497px;top:215.5px;width:32px;text-align:right;font-family:'Liberation Mono';font-size:13.33px;line-height:22px;color:#4B5059">6</div><div class="t" style="left:548px;top:215.5px;font-family:'Liberation Mono';font-size:13.33px;line-height:22px;color:#BCBEC4">    <span class="kw">int</span> <span class="fn">setFramePerSecond</span>(<span class="kw">int</span> fps);</div><div class="t" style="left:497px;top:237.5px;width:32px;text-align:right;font-family:'Liberation Mono';font-size:13.33px;line-height:22px;color:#4B5059">7</div><div class="t" style="left:548px;top:237.5px;font-family:'Liberation Mono';font-size:13.33px;line-height:22px;color:#BCBEC4">    <span class="kw">int</span> <span class="fn">boostUp</span>(<span class="kw">int</span> seconds);</div><div class="t" style="left:497px;top:259.5px;width:32px;text-align:right;font-family:'Liberation Mono';font-size:13.33px;line-height:22px;color:#4B5059">8</div><div class="t" style="left:548px;top:259.5px;font-family:'Liberation Mono';font-size:13.33px;line-height:22px;color:#BCBEC4">    <span class="kw">int</span> <span class="fn">getAbstractTemperature</span>();</div><div class="t" style="left:497px;top:281.5px;width:32px;text-align:right;font-family:'Liberation Mono';font-size:13.33px;line-height:22px;color:#4B5059">9</div><div class="t" style="left:548px;top:281.5px;font-family:'Liberation Mono';font-size:13.33px;line-height:22px;color:#BCBEC4">    <span class="kw">int</span> <span class="fn">setGamePowerSaving</span>(<span class="kw">boolean</span> enable);</div><div class="t" style="left:497px;top:303.5px;width:32px;text-align:right;font-family:'Liberation Mono';font-size:13.33px;line-height:22px;color:#4B5059">10</div><div class="t" style="left:548px;top:303.5px;font-family:'Liberation Mono';font-size:13.33px;line-height:22px;color:#BCBEC4">}</div><div class="a" style="left:487px;top:273px;width:0px;height:0px;background:#1E1F22;"></div><div class="t" style="left:53px;top:616px;font-size:13px;line-height:18px;color:#DFE1E5;letter-spacing:0px;font-weight:normal;">构建</div><div class="t" style="left:107px;top:616px;font-size:13px;line-height:18px;color:#DFE1E5;letter-spacing:0px;font-weight:normal;">同步</div><svg style="left:145px;top:621px;" width="8" height="8" viewBox="0 0 8 8"><path d="M0.5 0.5 L7.5 7.5 M7.5 0.5 L0.5 7.5" stroke="#8C8F94" stroke-width="1.1" stroke-linecap="round"/></svg><div class="t" style="left:176px;top:616px;font-size:13px;line-height:18px;color:#DFE1E5;letter-spacing:0px;font-weight:normal;">构建输出</div><svg style="left:240px;top:621px;" width="8" height="8" viewBox="0 0 8 8"><path d="M0.5 0.5 L7.5 7.5 M7.5 0.5 L0.5 7.5" stroke="#8C8F94" stroke-width="1.1" stroke-linecap="round"/></svg><div class="a" style="left:41px;top:644px;width:1838px;height:1px;background:#1E1F22;"></div><div class="a" style="left:164px;top:641.7px;width:95px;height:3px;background:#63666C;border-radius:1.5px"></div><div class="a" style="left:41px;top:644px;width:1838px;height:0px;background:#1E1F22;"></div><div class="a" style="left:73px;top:645px;width:1px;height:343px;background:#1E1F22;"></div><svg style="left:49px;top:656.5px;" width="18" height="18" viewBox="0 0 18 18"><g transform="scale(0.73)"><path d="M1.5 1.5 H14 C16.8 1.5 18.6 3.5 19 7.2 C17.5 6.2 15.8 5.8 13 5.8 H12.8 V17.8 C12.8 18.5 12.3 19 11.6 19 H8 C7.3 19 6.8 18.5 6.8 17.8 V5.8 H1.5 Z M3.5 1.5 V5.8" fill="none" stroke="#CED0D6" stroke-width="1.75" stroke-linejoin="round"/></g></svg><div class="a" style="left:47px;top:681px;width:20px;height:1px;background:#43454A;"></div><div class="a" style="left:51px;top:692px;width:12px;height:12px;background:#5A5D63;border-radius:2px"></div><div class="a" style="left:47px;top:714px;width:20px;height:1px;background:#43454A;"></div><svg style="left:49px;top:722px;" width="16" height="18" viewBox="0 0 16 18"><path d="M3 2.5 H13 L11 6.5 L13.5 10.2 H2.5 L5 6.5 Z M8 10.2 V15.5" fill="none" stroke="#CED0D6" stroke-width="1.35" stroke-linejoin="round" stroke-linecap="round"/></svg><svg style="left:48px;top:750px;" width="20" height="16" viewBox="0 0 20 16"><path d="M1.5 7.5 C3.5 4 6 2.5 9 2.5 C12 2.5 14.5 4 16.5 7.5 C14.5 11 12 12.5 9 12.5 C6 12.5 3.5 11 1.5 7.5 Z" fill="none" stroke="#CED0D6" stroke-width="1.2" stroke-linecap="round" stroke-linejoin="round"/><circle cx="9" cy="7.5" r="2.3" fill="none" stroke="#CED0D6" stroke-width="1.2" stroke-linecap="round" stroke-linejoin="round"/><path d="M18 13 V17 H14 Z" fill="#CED0D6"/></svg><svg style="left:89.0px;top:657.75px;" width="10" height="6.5" viewBox="0 0 10 6.5"><path d="M1 1 L5.0 5.5 L9 1" fill="none" stroke="#CED0D6" stroke-width="1.1" stroke-linecap="round" stroke-linejoin="round"/></svg><svg style="left:108px;top:654px;" width="14" height="14" viewBox="0 0 14 14"><circle cx="7" cy="7" r="6.8" fill="#DB5C5C"/><rect x="6.1" y="3" width="1.8" height="5.2" rx="0.9" fill="#2B2D30"/><circle cx="7" cy="10.3" r="1" fill="#2B2D30"/></svg><div class="t" style="left:126px;top:652px;font-size:12.4px;line-height:18px;color:#DFE1E5;letter-spacing:0px;font-weight:bold;">Build proj</div><div class="t" style="left:188.5px;top:652.5px;font-size:12px;line-height:18px;color:#6F737A;letter-spacing:0px;font-weight:normal;">6分钟48秒255毫秒</div><svg style="left:127px;top:677px;" width="15" height="15" viewBox="0 0 15 15"><path d="M7 1.5 V10 M3.8 7 L7 10.2 L10.2 7 M1.5 9.5 V13.5 H12.5 V9.5" fill="none" stroke="#CED0D6" stroke-width="1.2" stroke-linecap="round" stroke-linejoin="round"/></svg><div class="t" style="left:145px;top:676px;font-size:13px;line-height:18px;color:#DFE1E5;letter-spacing:0.45px;font-weight:normal;">Download info</div><svg style="left:108.0px;top:705.75px;" width="10" height="6.5" viewBox="0 0 10 6.5"><path d="M1 1 L5.0 5.5 L9 1" fill="none" stroke="#CED0D6" stroke-width="1.1" stroke-linecap="round" stroke-linejoin="round"/></svg><svg style="left:127px;top:702px;" width="14" height="14" viewBox="0 0 14 14"><circle cx="7" cy="7" r="6.8" fill="#DB5C5C"/><rect x="6.1" y="3" width="1.8" height="5.2" rx="0.9" fill="#2B2D30"/><circle cx="7" cy="10.3" r="1" fill="#2B2D30"/></svg><div class="t" style="left:145px;top:700px;font-size:13px;line-height:18px;color:#DFE1E5;letter-spacing:0.45px;font-weight:normal;">:libcocos2dx</div><div class="t" style="left:225px;top:700.5px;font-size:12px;line-height:18px;color:#6F737A;letter-spacing:0px;font-weight:normal;">5秒364毫秒</div><svg style="left:127.0px;top:729.75px;" width="10" height="6.5" viewBox="0 0 10 6.5"><path d="M1 1 L5.0 5.5 L9 1" fill="none" stroke="#CED0D6" stroke-width="1.1" stroke-linecap="round" stroke-linejoin="round"/></svg><svg style="left:146px;top:725.5px;" width="16" height="14" viewBox="0 0 16 14"><path d="M1.5 1.5 H11 V7 C11 9.5 9 11 6.3 11 C3.5 11 1.5 9.5 1.5 7 Z M11 3 H12.5 C14 3 14.5 4 14.5 5 C14.5 6.2 13.5 7 12 7 H11 M1 13 H11.5" fill="none" stroke="#E08855" stroke-width="1.1"/><path d="M2.2 2.2 H10.3 V7 C10.3 9 8.5 10.3 6.3 10.3 C4 10.3 2.2 9 2.2 7 Z" fill="#3A2C25"/></svg><div class="a" style="left:74px;top:645px;width:221px;height:343px;overflow:hidden"><div class="a" style="left:12px;top:100px;width:240px;height:24px;background:#43454A;border-radius:5px"></div></div><div class="a" style="left:276px;top:745px;width:19px;height:24px;background:#43454A;"></div><svg style="left:165px;top:750px;" width="14" height="14" viewBox="0 0 14 14"><circle cx="7" cy="7" r="6.8" fill="#DB5C5C"/><rect x="6.1" y="3" width="1.8" height="5.2" rx="0.9" fill="#2B2D30"/><circle cx="7" cy="10.3" r="1" fill="#2B2D30"/></svg><svg style="left:165px;top:774px;" width="14" height="14" viewBox="0 0 14 14"><circle cx="7" cy="7" r="6.8" fill="#DB5C5C"/><rect x="6.1" y="3" width="1.8" height="5.2" rx="0.9" fill="#2B2D30"/><circle cx="7" cy="10.3" r="1" fill="#2B2D30"/></svg><svg style="left:165px;top:798px;" width="14" height="14" viewBox="0 0 14 14"><circle cx="7" cy="7" r="6.8" fill="#DB5C5C"/><rect x="6.1" y="3" width="1.8" height="5.2" rx="0.9" fill="#2B2D30"/><circle cx="7" cy="10.3" r="1" fill="#2B2D30"/></svg><svg style="left:165px;top:822px;" width="14" height="14" viewBox="0 0 14 14"><circle cx="7" cy="7" r="6.8" fill="#DB5C5C"/><rect x="6.1" y="3" width="1.8" height="5.2" rx="0.9" fill="#2B2D30"/><circle cx="7" cy="10.3" r="1" fill="#2B2D30"/></svg><div class="a" style="left:74px;top:645px;width:221px;height:343px;overflow:hidden"><div class="t" style="left:108.5px;top:104px;font-size:13px;line-height:18px;color:#DFE1E5;letter-spacing:0.3px">错误: 程序包com.enhance</div><div class="t" style="left:108.5px;top:128px;font-size:13px;line-height:18px;color:#DFE1E5;letter-spacing:0.3px">错误: 找不到符号符号</div><div class="t" style="left:108.5px;top:152px;font-size:13px;line-height:18px;color:#DFE1E5;letter-spacing:0.3px">错误: 找不到符号符号</div><div class="t" style="left:108.5px;top:176px;font-size:13px;line-height:18px;color:#DFE1E5;letter-spacing:0.3px">错误: 程序包IGameTuningService</div><div class="t" style="left:90px;top:79px;font-size:13px;line-height:18px;color:#DFE1E5;letter-spacing:0.45px">Cocos2dxHelper.java</div></div><div class="a" style="left:295px;top:645px;width:1px;height:343px;background:#1E1F22;"></div><div class="a" style="left:75px;top:979px;width:53px;height:8px;background:#4B4D51;"></div><div class="a" style="left:295px;top:645px;width:1552px;height:343px;background:#1E1F22;"></div><div class="a" style="left:1847px;top:645px;width:32px;height:343px;background:#2B2D30;"></div><svg style="left:1855px;top:658px;" width="16" height="16" viewBox="0 0 16 16"><path d="M1.5 2.5 H14.5 M1.5 6.5 H11.5 C13.5 6.5 14.5 7.5 14.5 9 C14.5 10.5 13.5 11.5 11.5 11.5 H8.5 M10.5 9.5 L8.5 11.5 L10.5 13.5 M1.5 11.5 H5" fill="none" stroke="#CED0D6" stroke-width="1.2" stroke-linecap="round" stroke-linejoin="round"/></svg><svg style="left:1855px;top:684px;" width="16" height="16" viewBox="0 0 16 16"><path d="M1.5 2.5 H6 M1.5 6.5 H6 M1.5 13.5 H14.5 M11 2 V10.5 M8 7.5 L11 10.5 L14 7.5" fill="none" stroke="#CED0D6" stroke-width="1.2" stroke-linecap="round" stroke-linejoin="round"/></svg><div class="a" style="left:1460px;top:647px;width:184px;height:20px;background:#214283;"></div><div class="t" style="left:307px;top:646.5px;font-family:'Liberation Mono';font-size:13.33px;line-height:22px;color:#548AF7;text-decoration:underline;text-underline-offset:2px">C:\Users\Administrator\Documents\Development\TestTut\cocos2d\cocos\platform\android\java\src\org\cocos2dx\lib\Cocos2dxHelper.java:62:</div><div class="t" style="left:1379px;top:646.5px;font-family:'Liberation Mono';font-size:13.33px;line-height:22px;color:#F75464">错误: 程序包<span style="letter-spacing:0">com.enhance.gameservice</span>不存在</div><div class="t" style="left:307px;top:668.5px;font-family:'Liberation Mono';font-size:13.33px;line-height:22px;color:#F75464">import com.enhance.gameservice.IGameTuningService;</div><div class="t" style="left:307px;top:690.5px;font-family:'Liberation Mono';font-size:13.33px;line-height:22px;color:#F75464">                              ^</div><div class="a" style="left:14px;top:999px;width:7px;height:7px;border:1.3px solid #548AF7;border-radius:1.5px"></div><div class="t" style="left:26px;top:994px;font-size:13px;line-height:18px;color:#A8ADB5;letter-spacing:0.45px">cocos</div><svg style="left:72.0px;top:997.5px;" width="6" height="9" viewBox="0 0 6 9"><path d="M1 1 L5 4.5 L1 8" fill="none" stroke="#8C8F94" stroke-width="1.1" stroke-linecap="round" stroke-linejoin="round"/></svg><svg style="left:148.0px;top:997.5px;" width="6" height="9" viewBox="0 0 6 9"><path d="M1 1 L5 4.5 L1 8" fill="none" stroke="#8C8F94" stroke-width="1.1" stroke-linecap="round" stroke-linejoin="round"/></svg><svg style="left:218.0px;top:997.5px;" width="6" height="9" viewBox="0 0 6 9"><path d="M1 1 L5 4.5 L1 8" fill="none" stroke="#8C8F94" stroke-width="1.1" stroke-linecap="round" stroke-linejoin="round"/></svg><svg style="left:279.0px;top:997.5px;" width="6" height="9" viewBox="0 0 6 9"><path d="M1 1 L5 4.5 L1 8" fill="none" stroke="#8C8F94" stroke-width="1.1" stroke-linecap="round" stroke-linejoin="round"/></svg><svg style="left:321.0px;top:997.5px;" width="6" height="9" viewBox="0 0 6 9"><path d="M1 1 L5 4.5 L1 8" fill="none" stroke="#8C8F94" stroke-width="1.1" stroke-linecap="round" stroke-linejoin="round"/></svg><svg style="left:372.0px;top:997.5px;" width="6" height="9" viewBox="0 0 6 9"><path d="M1 1 L5 4.5 L1 8" fill="none" stroke="#8C8F94" stroke-width="1.1" stroke-linecap="round" stroke-linejoin="round"/></svg><svg style="left:449.0px;top:997.5px;" width="6" height="9" viewBox="0 0 6 9"><path d="M1 1 L5 4.5 L1 8" fill="none" stroke="#8C8F94" stroke-width="1.1" stroke-linecap="round" stroke-linejoin="round"/></svg><svg style="left:552.0px;top:997.5px;" width="6" height="9" viewBox="0 0 6 9"><path d="M1 1 L5 4.5 L1 8" fill="none" stroke="#8C8F94" stroke-width="1.1" stroke-linecap="round" stroke-linejoin="round"/></svg><div class="t" style="left:87.5px;top:994px;font-size:13px;line-height:18px;color:#A8ADB5;letter-spacing:0.45px">platform</div><div class="t" style="left:163px;top:994px;font-size:13px;line-height:18px;color:#A8ADB5;letter-spacing:0.45px">android</div><div class="a" style="left:234px;top:999px;width:7px;height:7px;border:1.3px solid #548AF7;border-radius:1.5px"></div><div class="t" style="left:246px;top:994px;font-size:13px;line-height:18px;color:#A8ADB5;letter-spacing:0.45px">java</div><div class="t" style="left:294px;top:994px;font-size:13px;line-height:18px;color:#A8ADB5;letter-spacing:0.45px">src</div><div class="t" style="left:337.5px;top:994px;font-size:13px;line-height:18px;color:#A8ADB5;letter-spacing:0.45px">com</div><div class="t" style="left:387.5px;top:994px;font-size:13px;line-height:18px;color:#A8ADB5;letter-spacing:0.45px">enhance</div><div class="t" style="left:465px;top:994px;font-size:13px;line-height:18px;color:#A8ADB5;letter-spacing:0.45px">gameservice</div><svg style="left:568.5px;top:997px;" width="14" height="10" viewBox="0 0 14 10"><g transform="scale(1.0)"><path d="M1.2 8.6 C1.2 5.2 3.6 3 7 3 C10.4 3 12.8 5.2 12.8 8.6 Z" fill="none" stroke="#3FD582" stroke-width="1.3" stroke-linejoin="round"/><path d="M3.7 3.9 L2.9 1.2 M10.3 3.9 L11.1 1.2" stroke="#3FD582" stroke-width="1.2" stroke-linecap="round"/><circle cx="4.6" cy="6.5" r="0.8" fill="#3FD582"/><circle cx="9.4" cy="6.5" r="0.8" fill="#3FD582"/></g></svg><div class="t" style="left:588px;top:994px;font-size:13px;line-height:18px;color:#A8ADB5;letter-spacing:0.45px">IGameTuningService.aidl</div><div class="t" style="left:1636px;top:994px;font-size:13px;line-height:18px;color:#A8ADB5;letter-spacing:0.45px">1:</div><div class="a" style="left:1642px;top:869px;width:134px;height:143px;border-radius:9px;background:rgba(0,0,0,0.3);filter:blur(2px)"></div><div class="a" style="left:1645px;top:872px;width:128px;height:137px;border-radius:7px;background:linear-gradient(180deg,#9BA1A7 0,#A2A8AE 10px,#D9DDE0 16px,#F0F2F4 22px,#8C9399 40px,#6F767D 100%);border:1px solid #1C1E21"></div><div class="a" style="left:1646px;top:873px;width:126px;height:5px;border-radius:6px 6px 0 0;background:linear-gradient(180deg,#B4BAC0,#8A9197)"></div><div class="a" style="left:1651px;top:878px;width:116px;height:125px;background:#FFFFFF;border:1px solid #3F454B"></div><div class="a" style="left:1652px;top:957px;width:114px;height:45px;background:#F1F5FB;border-top:1px solid #D5DFEE"></div><div class="t" style="left:1687px;top:971.5px;font-size:12.3px;line-height:16px;color:#2B6FCB">自定义...</div><svg style="left:1667px;top:893px;" width="18" height="18" viewBox="0 0 18 18"><defs><radialGradient id="gl" cx="0.35" cy="0.3" r="0.8"><stop offset="0" stop-color="#E6F28C"/><stop offset="0.45" stop-color="#4FA0D8"/><stop offset="1" stop-color="#1B4E9A"/></radialGradient></defs><ellipse cx="5.5" cy="10" rx="4.8" ry="4.3" fill="none" stroke="#E24A2C" stroke-width="1.6"/><ellipse cx="5.5" cy="10.5" rx="4.2" ry="3.6" fill="none" stroke="#2F7FD0" stroke-width="1.2"/><circle cx="11" cy="6.5" r="5.6" fill="url(#gl)"/><path d="M2.5 12 C4 15 8 15.5 10 14 L8.5 17 L15.5 11.5 L10.5 10.5 L11 12.5 C8.5 13.5 5 13 2.5 12 Z" fill="#2EA84A"/><path d="M8.5 17 L15.5 11.5 L12 12 Z" fill="#1A6B2A"/></svg><svg style="left:1700px;top:894px;" width="16" height="16" viewBox="0 0 16 16"><rect x="0.5" y="0.5" width="15" height="15" rx="2.5" fill="#1C8AD9"/><rect x="4" y="2.5" width="8" height="7" fill="none" stroke="#fff" stroke-width="1"/><path d="M6 4 L10 8 M10 4 L6 8" stroke="#fff" stroke-width="0.9"/><path d="M8 12 H13 M9 11 L8 12 L9 13 M8 13.5 H13" stroke="#fff" stroke-width="0.9"/><path d="M0.5 10 L5 15.5 H2.5 C1.5 15.5 0.5 14.5 0.5 13.5 Z" fill="#E9B53A"/><path d="M0.5 12 L3 15.5 H1 Z" fill="#E44A3A"/></svg><svg style="left:1732px;top:894px;" width="17" height="17" viewBox="0 0 17 17"><rect x="1.5" y="0" width="4" height="4" fill="#D4D7DA" stroke="#8F959B" stroke-width="0.6"/><path d="M0.5 4 H6.5 V11 C6.5 12 5 13 3.5 13 C2 13 0.5 12 0.5 11 Z" fill="#6C7177"/><rect x="2.5" y="13" width="2" height="3" fill="#3E4247"/><circle cx="11.5" cy="10.5" r="5" fill="#2C9A2C"/><path d="M9 10.5 L11 12.7 L14.3 8.2" fill="none" stroke="#fff" stroke-width="1.4"/></svg><div class="a" style="left:1660px;top:920px;width:1px;height:30px;background:linear-gradient(180deg,#fff,#C8CCD0 50%,#fff);"></div><div class="a" style="left:1690px;top:920px;width:1px;height:30px;background:linear-gradient(180deg,#fff,#C8CCD0 50%,#fff);"></div><div class="a" style="left:1663px;top:946px;width:26px;height:4px;border-radius:50%;background:radial-gradient(ellipse,#9CC9F5,rgba(255,255,255,0))"></div><svg style="left:1670px;top:926px;" width="12" height="17" viewBox="0 0 12 17"><ellipse cx="6" cy="8" rx="5.8" ry="8" fill="#0A2C66"/><path d="M3.2 5 L8.5 10.5 L6 13 V3 L8.5 5.5 L3.2 11" fill="none" stroke="#fff" stroke-width="1.1"/></svg><svg style="left:1702px;top:927px;" width="12" height="16" viewBox="0 0 12 16"><rect x="0" y="0" width="5.2" height="5.2" fill="#4A8BF5"/><rect x="6.3" y="0" width="5.2" height="5.2" fill="#F9C20A"/><path d="M0 6.3 H5.2 V10.5 L0 15 Z" fill="#E8453C"/><path d="M6.3 6.3 H11.5 V15 L6.3 10.5 Z" fill="#6BB641"/></svg><svg style="left:1732px;top:926px;" width="17" height="17" viewBox="0 0 17 17"><rect x="0.5" y="0" width="16" height="16" fill="#F6B80B"/><path d="M3 3 L9 1.5 V14 L3 12.5 Z" fill="#4E5358"/><path d="M9 4 H13 V9" fill="none" stroke="#4E5358" stroke-width="1.2"/><circle cx="12" cy="12" r="4" fill="#E5121E"/><rect x="9.6" y="11" width="4.8" height="2" fill="#fff"/></svg><div class="a" style="left:1738px;top:996px;width:182px;height:22px;background:#FFFFFF;"></div><svg style="left:1712px;top:990px;" width="32" height="28" viewBox="0 0 32 28"><defs><linearGradient id="sg" x1="0" y1="0" x2="0" y2="1"><stop offset="0" stop-color="#FF6A2E"/><stop offset="1" stop-color="#E8461A"/></linearGradient></defs><rect x="4" y="3" width="24" height="25" rx="4" fill="url(#sg)" transform="rotate(-14 16 15)"/><path d="M22.5 8.5 C19 6.5 10.5 7.5 10.5 11.5 C10.5 15 21 13.5 21 18 C21 22 13 23 8.5 20.5" fill="none" stroke="#fff" stroke-width="3.6" stroke-linecap="round"/></svg><div class="t" style="left:1747px;top:998px;font-size:15px;line-height:18px;color:#1677D2;font-weight:bold;-webkit-text-stroke:0.6px #1677D2">中</div><svg style="left:1768px;top:1000px;" width="16" height="16" viewBox="0 0 16 16"><circle cx="4.5" cy="4.8" r="2" fill="none" stroke="#1677D2" stroke-width="1.6"/><circle cx="11.3" cy="9" r="2" fill="#1677D2"/><path d="M13 9 C13 11 12 12.5 10 13.5" fill="none" stroke="#1677D2" stroke-width="1.6"/></svg><svg style="left:1791px;top:999px;" width="16" height="16" viewBox="0 0 16 16"><circle cx="8" cy="8" r="7" fill="none" stroke="#1677D2" stroke-width="1.5"/><circle cx="5.5" cy="6.5" r="1" fill="#1677D2"/><circle cx="10.5" cy="6.5" r="1" fill="#1677D2"/><path d="M4.5 9.5 C6 12 10 12 11.5 9.5" fill="none" stroke="#1677D2" stroke-width="1.4"/></svg><svg style="left:1815px;top:998px;" width="12" height="18" viewBox="0 0 12 18"><rect x="3" y="0.5" width="6" height="11" rx="3" fill="#1677D2"/><path d="M1 7 C1 11 3 13 6 13 C9 13 11 11 11 7 M6 13 V16.5 M3 16.5 H9" fill="none" stroke="#1677D2" stroke-width="1.4"/></svg><svg style="left:1835px;top:1001px;" width="17" height="12" viewBox="0 0 17 12"><rect x="0.5" y="0.5" width="16" height="11" rx="1" fill="#1677D2"/><path d="M2.5 3 H14.5 M2.5 5.5 H14.5 M4 8.5 H13" stroke="#fff" stroke-width="1" stroke-dasharray="1.2 0.8"/></svg><svg style="left:1858px;top:998px;" width="18" height="18" viewBox="0 0 18 18"><circle cx="7" cy="4" r="3" fill="#B8C3CF"/><path d="M1 13 C1 9 3.5 7.5 7 7.5 C10 7.5 11 8.5 12 10 V14 H1 Z" fill="#B8C3CF"/><rect x="8" y="10.5" width="9" height="6" fill="#fff"/><text x="8.5" y="16.5" font-size="7" fill="#B8C3CF" font-family="Liberation Sans">10</text></svg><svg style="left:1880px;top:999px;" width="16" height="15" viewBox="0 0 16 15"><path d="M5 0.5 L1 3 L0 7 L3 7.5 V14.5 H13 V7.5 L16 7 L15 3 L11 0.5 C10 2.5 6 2.5 5 0.5 Z" fill="#1677D2"/></svg><svg style="left:1902px;top:1000px;" width="14" height="14" viewBox="0 0 14 14"><rect x="0" y="0" width="6" height="6" fill="#1677D2"/><rect x="8" y="0" width="6" height="6" fill="none" stroke="#1677D2" stroke-width="1.5"/><rect x="0" y="8" width="6" height="6" fill="#1677D2"/><rect x="8" y="8" width="6" height="6" fill="#1677D2"/></svg>
</body></html>
